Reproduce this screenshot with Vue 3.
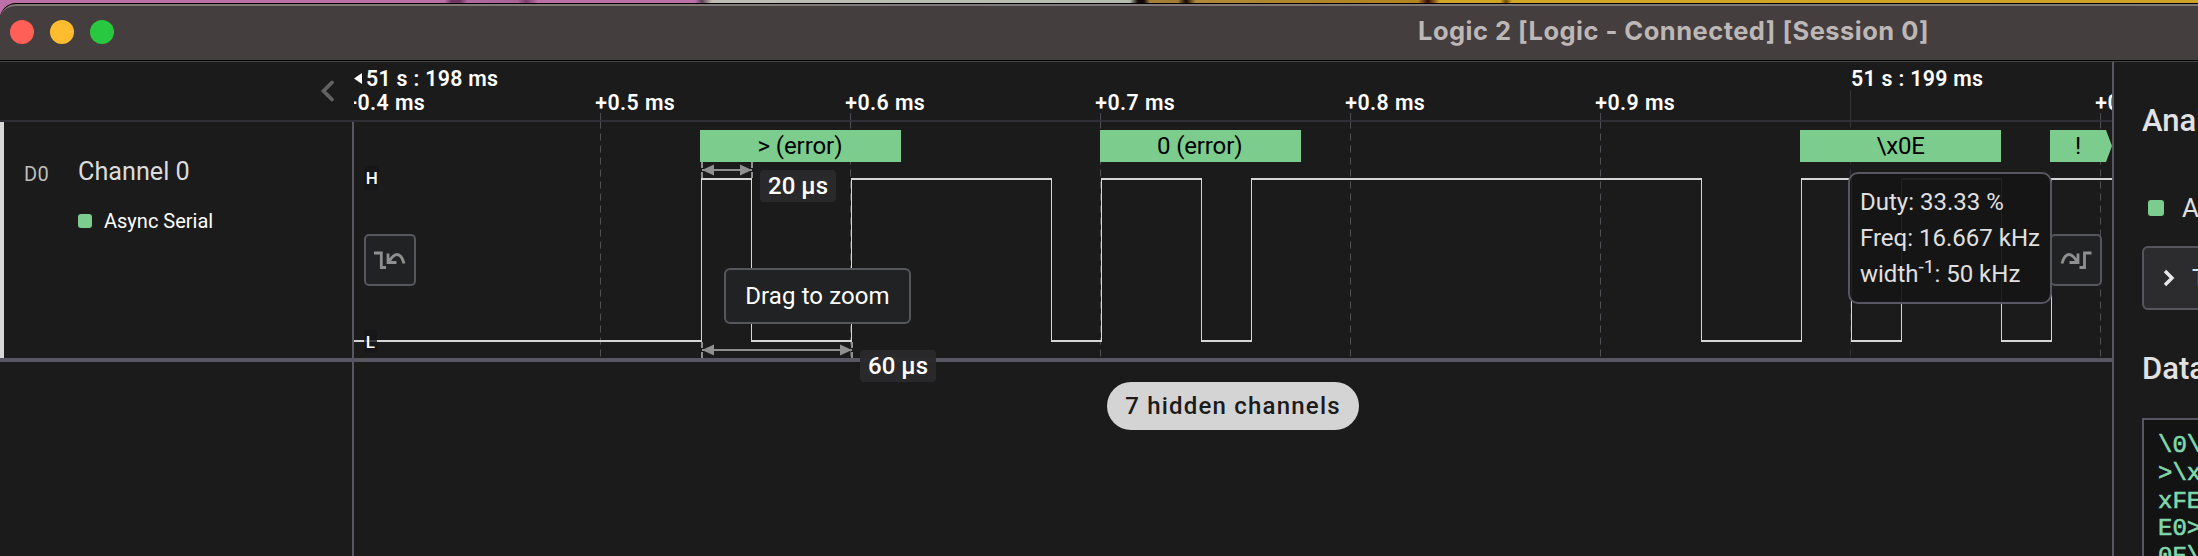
<script setup>
const ticks = [
  { x: 350, label: '+0.4 ms' },
  { x: 600, label: '+0.5 ms' },
  { x: 850, label: '+0.6 ms' },
  { x: 1100, label: '+0.7 ms' },
  { x: 1350, label: '+0.8 ms' },
  { x: 1600, label: '+0.9 ms' },
  { x: 2100, label: '+0.1 ms' },
]
const gridLines = [600, 850, 1100, 1350, 1600, 1850, 2100]

const edges = [701, 751, 851, 1051, 1101, 1201, 1251, 1701, 1801, 1851, 1901, 2001, 2051]
const HIGH = 178
const LOW = 340
const levels = [354, ...edges].map((x, i, all) => ({
  x,
  y: i % 2 ? HIGH : LOW,
  width: (all[i + 1] ?? 2111) + 1 - x,
}))

const frames = [
  { x: 700, text: '> (error)', start: 757.5, length: 85 },
  { x: 1100, text: '0 (error)', start: 1157, length: 85.5 },
  { x: 1800, text: '\\x0E', start: 1876.5, length: 48.5 },
]
const measures = [
  { from: 702, to: 752, y: 170, box: 760, top: 170, text: '20 µs' },
  { from: 702, to: 852, y: 350, box: 860, top: 350, text: '60 µs' },
]
const terminal = ['\\0\\0>\\x0E', '>\\xFE0>\\', 'xFE\\x0E\\x', 'E0>\\xFE0', '0E\\x0E>']
</script>

<template>
  <div class="desktop">
    <div class="window">
      <header class="titlebar">
        <div class="lights"><i class="red"></i><i class="yellow"></i><i class="green"></i></div>
        <div class="title">Logic 2 [Logic - Connected] [Session 0]</div>
      </header>

      <div class="body">
        <main class="capture">
          <div class="ruler">
            <div class="ruler-side">
              <svg class="collapse" width="16" height="24" viewBox="0 0 16 24">
                <path d="M12 3.5 3.500 12l8.500 8.500" fill="none" stroke="#626262" stroke-width="3.800" stroke-linecap="round" />
              </svg>
            </div>
            <svg class="ruler-scale" width="1758" height="58" viewBox="354 62 1758 58">
              <g class="tick-text">
                <path d="M354 78.5 362 73v11z" fill="#fff" />
                <text x="366" y="86.300" textLength="132">51 s : 198 ms</text>
                <text x="1851" y="86.300" textLength="132">51 s : 199 ms</text>
                <text v-for="t in ticks" :key="t.x" :x="t.x - 4.700" y="109.600" textLength="79.500">{{ t.label }}</text>
              </g>
              <rect v-for="x in gridLines" :key="x" :x="x" :y="x === 1850 ? 90 : 113" width="1" height="30" :fill="x === 1850 ? '#323237' : '#4a4a50'" />
            </svg>
          </div>

          <div class="channel-row">
            <div class="channel-side">
              <span class="channel-id">D0</span>
              <div class="channel-info">
                <div class="channel-name">Channel 0</div>
                <div class="channel-analyzer"><i></i><span>Async Serial</span></div>
              </div>
            </div>
            <svg class="wave" width="1758" height="236" viewBox="354 122 1758 236">
              <g v-for="x in gridLines" :key="'g' + x">
                <line :x1="x + 0.5" :x2="x + 0.5" y1="121.5" y2="358" :stroke="x === 1850 ? '#323237' : '#4f4f55'" stroke-width="1" stroke-dasharray="7 5" />
              </g>
              <g fill="#d6d6d6">
                <rect v-for="l in levels" :key="'l' + l.x" :x="l.x" :y="l.y" :width="l.width" height="2" />
                <rect v-for="e in edges" :key="'e' + e" :x="e" y="178" width="1" height="164" />
              </g>
              <g v-for="f in frames" :key="'f' + f.x">
                <rect :x="f.x" y="130" width="201" height="32" fill="#7ccd8d" />
                <text class="frame-text" :x="f.start" y="154" :textLength="f.length">{{ f.text }}</text>
              </g>
              <path d="M2050 130h56l6 16-6 16h-56z" fill="#7ccd8d" />
              <text class="frame-text" x="2075" y="154">!</text>

              <g v-for="m in measures" :key="'m' + m.y">
                <g stroke="#8f8f8f" stroke-width="2">
                  <path :d="`M${m.from} ${m.y}H${m.to}`" />
                  <path :d="`M${m.from} ${m.y - 8}v6m0 4v6M${m.to} ${m.y - 8}v6m0 4v6`" />
                </g>
                <path :d="`M${m.from} ${m.y}l12-5.5v11zM${m.to} ${m.y}l-12-5.5v11z`" fill="#8f8f8f" />
                <rect :x="m.box" :y="m.top" width="76" height="32" rx="4" fill="#2a2a2d" fill-opacity=".95" />
                <text class="measure-text" :x="m.box + 8" :y="m.top + 23.7" textLength="60">{{ m.text }}</text>
              </g>

              <rect x="364" y="166" width="14.500" height="24" rx="4" fill="#17171a" />
              <text class="level-text" x="365.800" y="184">H</text>
              <rect x="364" y="330" width="13" height="23" rx="4" fill="#17171a" fill-opacity=".8" />
              <text class="level-text" x="365.800" y="348">L</text>
            </svg>

            <button class="jump prev">
              <svg width="34" height="22" viewBox="0 0 34 22" fill="none" stroke="#8f8f8f" stroke-width="2.800">
                <path d="M1 4h7.300v14.500h4.700M15 4.500v9h8.500M15.500 13.500C18.500 8 21 5.500 24 5.500S29.500 9 31 14.500" />
              </svg>
            </button>
            <button class="jump next">
              <svg width="34" height="22" viewBox="0 0 34 22" fill="none" stroke="#8f8f8f" stroke-width="2.800">
                <path d="M32.500 4h-7v14.500h-5M19 4.500v9h-8.500M18.500 13.500C15.500 8 13 5.500 10 5.500S4.500 9 3 14.500" />
              </svg>
            </button>
            <div class="hint">Drag to zoom</div>
            <div class="stats">
              <div><span>Duty: 33.33 %</span></div>
              <div><span>Freq: 16.667 kHz</span></div>
              <div><span>width<sup>-1</sup>: 50 kHz</span></div>
            </div>
          </div>

          <div class="below">
            <div class="below-side"></div>
            <div class="below-main"><button class="hidden-channels">7 hidden channels</button></div>
          </div>
        </main>

        <aside class="panel">
          <h2 class="analyzers-title">Analyzers</h2>
          <div class="analyzer"><i></i><span>Async Serial</span></div>
          <div class="trigger">
            <svg width="14" height="20" viewBox="0 0 14 20"><path d="M3 3l7 7-7 7" fill="none" stroke="#e8e8e8" stroke-width="3.400" /></svg>
            <span>Trigger View</span>
          </div>
          <h2 class="data-title">Data</h2>
          <div class="terminal"><div v-for="(line, i) in terminal" :key="i">{{ line }}</div></div>
        </aside>
      </div>
    </div>
  </div>
</template>

<style>
html, body { margin: 0; overflow: hidden; background: #1b1b1b; }
</style>

<style scoped>
* { box-sizing: border-box; }
.desktop {
  width: 2198px; height: 556px; overflow: hidden; padding-top: 3px;
  font-family: Roboto, "Liberation Sans", sans-serif; color: #e0e0e0;
  background: linear-gradient(90deg, #bd6fa7 0, #bd6fa7 444px, #6e3560 452px, #6e3560 460px, #b069a0 468px, #a86296 518px, #7a3d69 526px, #bd6fa7 538px, #bd6fa7 695px, #5e4258 702px, #c0bcb4 712px, #b4bbaa 1130px, #120808 1138px, #120808 1144px, #a8803c 1150px, #a07a30 1178px, #160806 1186px, #b08838 1196px, #b1841f 1418px, #3a0a08 1428px, #d3a726 1440px, #d3a726 1500px, #6e5010 1506px, #d3a726 1512px, #cfa226 100%);
}
.window {
  height: 553px; display: flex; flex-direction: column; overflow: hidden;
  border-top: 1px solid #000; border-top-left-radius: 16px; background: #1b1b1b;
}
.titlebar {
  position: relative; height: 57px; flex: none;
  background: #453e3e; border-top: 2px solid #807978; border-bottom: 1px solid #000; border-top-left-radius: 16px;
}
.lights { position: absolute; left: 10px; top: 14px; display: flex; gap: 16px; }
.lights i { width: 24px; height: 24px; border-radius: 50%; }
.red { background: #ff5f57; }
.yellow { background: #febc2e; }
.green { background: #28c840; }
.title { position: absolute; left: 1418px; top: 9px; font: 700 25.500px/32px Inter, sans-serif; letter-spacing: .47px; color: #bdb7b6; white-space: pre; }
.body { flex: 1; display: flex; border-top: 1px solid #444; }
.capture { width: 2112px; display: flex; flex-direction: column; }
.ruler { height: 60px; display: flex; border-bottom: 2px solid #2f2f35; }
.ruler-side { width: 354px; display: flex; justify-content: flex-end; padding: 17px 18px 0 0; }
.ruler-scale { display: block; }
.tick-text text { font: 600 21.300px Roboto, sans-serif; fill: #fff; }
.channel-row { position: relative; z-index: 1; height: 240px; display: flex; border-bottom: 4px solid #58575f; }
.channel-side { width: 354px; border-left: 4px solid #d8d8d8; border-right: 2px solid #58575f; display: flex; }
.channel-id { margin: 40px 0 0 20px; width: 54px; font-size: 20px; line-height: 24px; letter-spacing: .3px; color: #bebebe; }
.channel-name { margin-top: 34px; font-size: 25.200px; line-height: 32px; color: #dcdcdc; }
.channel-analyzer { display: flex; align-items: center; gap: 12px; margin-top: 21px; font-size: 20px; line-height: 24px; color: #fff; }
.channel-analyzer i { width: 14px; height: 14px; border-radius: 3px; background: #7ccd8d; }
.wave { display: block; overflow: visible; }
.frame-text { font: 400 24px Roboto, sans-serif; fill: #000; }
.measure-text { font: 500 24px Roboto, sans-serif; fill: #fff; }
.level-text { font: 500 17px Roboto, sans-serif; fill: #fff; }
.jump {
  position: absolute; top: 112px; width: 52px; height: 52px; padding: 0; border: 2px solid #56565d; border-radius: 5px;
  background: #202224; display: flex; align-items: center; justify-content: center;
}
.prev { left: 364px; }
.next { left: 2050px; }
.hint {
  position: absolute; left: 724px; top: 146px; width: 187px; height: 56px; border: 2px solid #56565d; border-radius: 6px;
  background: #202224; text-align: center; font-size: 24px; line-height: 52px; color: #fff; letter-spacing: .1px;
}
.stats {
  position: absolute; left: 1848px; top: 50px; width: 204px; height: 132px; padding: 10px 0 0 10px; border: 2px solid #58575f;
  border-radius: 10px; background: rgba(20, 20, 20, .93); font-size: 24px; line-height: 36px; white-space: nowrap; color: #e0e0e0;
}
.stats div { height: 36px; }
.stats sup { font-size: 19px; line-height: 0; vertical-align: 9px; }
.below { flex: 1; display: flex; }
.below-side { width: 354px; border-right: 2px solid #58575f; }
.below-main { flex: 1; display: flex; justify-content: center; align-items: flex-start; padding-top: 20px; }
.hidden-channels {
  width: 252px; height: 48px; padding: 0; border: 0; border-radius: 24px; background: #d4d4d4; color: #1b1b1b;
  font: 500 24px/48px Roboto, sans-serif; letter-spacing: 1.200px; white-space: nowrap;
}
.panel { width: 86px; overflow: hidden; border-left: 2px solid #58575f; padding-left: 28px; white-space: nowrap; }
h2 { margin: 0; font-size: 31px; line-height: 38px; font-weight: 500; color: #e2e2e2; }
.analyzers-title { padding-top: 40px; }
.analyzer { display: flex; align-items: center; gap: 18px; margin: 46px 0 0 6px; height: 44px; font-size: 26px; }
.analyzer i { width: 16px; height: 16px; flex: none; border-radius: 3px; background: #7ccd8d; }
.trigger {
  margin-top: 16px; width: 400px; height: 64px; border: 2px solid #56565d; border-radius: 6px; background: #2c2c2f;
  display: flex; align-items: center; gap: 16px; padding-left: 18px; font-size: 24px;
}
.data-title { margin-top: 40px; }
.terminal {
  margin-top: 30px; width: 400px; height: 200px; border: 2px solid #58575f; background: #131313; padding: 12px 14px;
  font: 400 24px/27.800px "Liberation Mono", monospace; color: #80d8ab; -webkit-text-stroke: .6px #80d8ab;
}
</style>
